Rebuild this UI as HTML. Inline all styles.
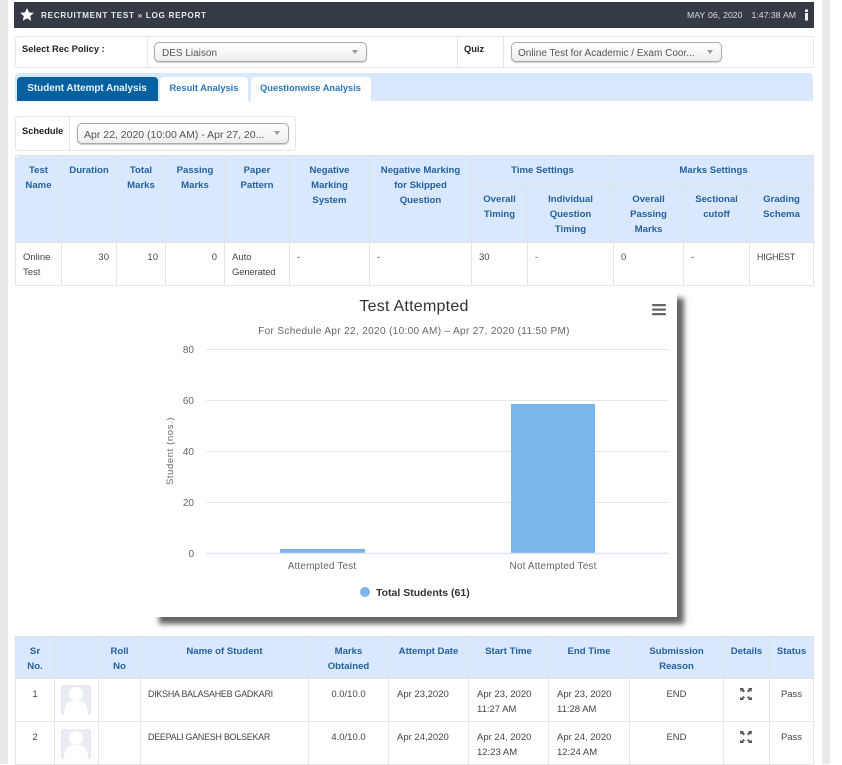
<!DOCTYPE html>
<html><head><meta charset="utf-8"><title>Log Report</title>
<style>
html,body{margin:0;padding:0;background:#fff;}
body{position:relative;width:842px;height:764px;overflow:hidden;font-family:"Liberation Sans",sans-serif;font-size:10px;color:#444;}
.a{position:absolute;white-space:nowrap;}
.box{position:absolute;box-sizing:border-box;background:#fff;border:1px solid #e6e6e6;border-radius:3px;}
.sel{position:absolute;box-sizing:border-box;border:1px solid #aaa;border-radius:5px;background:linear-gradient(#fff,#eee);box-shadow:0 1px 1px #ccc;font-size:10px;color:#555;line-height:21px;padding-left:7px;white-space:nowrap;}
.sel i{position:absolute;right:8px;top:7px;width:0;height:0;border:3.5px solid transparent;border-top:4px solid #999;border-bottom:0;}
.lab{position:absolute;font-weight:bold;font-size:9.3px;color:#222;white-space:nowrap;}
table{position:absolute;border-collapse:collapse;table-layout:fixed;font-size:9.5px;line-height:15px;}
th{background:#d9e8fd;color:#24619f;font-weight:bold;border:1px solid #e2e2e2;vertical-align:top;padding:7px 2px 0;text-align:center;font-size:9.6px;box-sizing:border-box;}
td{border:1px solid #e6e6e6;vertical-align:top;padding:7px 7px 0;background:#fff;color:#444;box-sizing:border-box;}
.t2 td{padding-top:8px}
.t2 th{padding-top:7px}
.t2 td.p8{padding-left:8px}
.n{font-size:8.9px;letter-spacing:-.22px}
.r{text-align:right}.c{text-align:center}
.tab{position:absolute;top:77px;height:24px;line-height:23px;text-align:center;font-weight:bold;font-size:9.3px;color:#2a78bd;background:#fff;border-radius:4px 4px 0 0;white-space:nowrap;}
.av{position:absolute;left:61px;width:30px;height:30px;}
</style></head><body>
<div class="a" style="left:0;top:0;width:8px;height:764px;background:#e9e9e9"></div>
<div class="a" style="left:822px;top:0;width:8px;height:764px;background:#e9e9e9"></div>

<div class="a" style="left:14px;top:2px;width:800px;height:26px;background:#343a46"></div>
<svg class="a" style="left:20px;top:8px" width="14" height="13" viewBox="0 0 14 13"><path d="M7 0l2 4.4 4.8.5-3.6 3.2 1 4.7L7 10.4 2.800 12.800l1-4.700L.2 4.900 5 4.400z" fill="#fff"/></svg>
<div class="a" style="left:41px;top:11px;font-size:8.2px;line-height:10px;font-weight:bold;color:#e8e8e8;letter-spacing:.68px">RECRUITMENT TEST » LOG REPORT</div>
<div class="a" style="left:687px;top:10px;font-size:8.7px;line-height:10px;color:#ddd;word-spacing:.6px">MAY 06, 2020&nbsp;&nbsp;&nbsp;1:47:38 AM</div>
<svg class="a" style="left:804px;top:9px" width="5" height="12" viewBox="0 0 5 12"><rect x="1" y="0.500" width="3" height="2.500" fill="#eee"/><rect x="1" y="4" width="3" height="7.500" fill="#eee"/></svg>

<div class="box" style="left:15px;top:36px;width:799px;height:32px"></div>
<div class="a" style="left:147px;top:36px;width:1px;height:32px;background:#e6e6e6"></div>
<div class="a" style="left:457px;top:36px;width:1px;height:32px;background:#e6e6e6"></div>
<div class="a" style="left:503px;top:36px;width:1px;height:32px;background:#e6e6e6"></div>
<div class="lab" style="left:22px;top:44px">Select Rec Policy :</div>
<div class="sel" style="left:154px;top:42px;width:213px;height:20px">DES Liaison<i></i></div>
<div class="lab" style="left:464px;top:44px">Quiz</div>
<div class="sel" style="left:511px;top:42px;width:211px;height:20px;padding-left:6px">Online Test for Academic / Exam Coor...<i></i></div>

<div class="a" style="left:15px;top:73px;width:798px;height:28px;background:#d9e8fd;border-radius:4px 4px 0 0"></div>
<div class="tab" style="left:17px;width:141px;background:#04609f;color:#eaf3fb;font-size:9.9px;padding-right:0;text-indent:-1px">Student Attempt Analysis</div>
<div class="tab" style="left:160px;width:88px">Result Analysis</div>
<div class="tab" style="left:251px;width:120px;font-size:9.3px;text-indent:-1px">Questionwise Analysis</div>

<div class="box" style="left:15px;top:116px;width:281px;height:35px"></div>
<div class="a" style="left:69px;top:116px;width:1px;height:35px;background:#e6e6e6"></div>
<div class="lab" style="left:22px;top:126px">Schedule</div>
<div class="sel" style="left:77px;top:123px;width:212px;height:21px;line-height:22px;font-size:10.5px;padding-left:6px">Apr 22, 2020 (10:00 AM) - Apr 27, 20...<i></i></div>

<table style="left:15px;top:155px;width:798px">
<colgroup><col style="width:46px"><col style="width:55px"><col style="width:49px"><col style="width:59px"><col style="width:65px"><col style="width:80px"><col style="width:102px"><col style="width:56px"><col style="width:86px"><col style="width:70px"><col style="width:66px"><col style="width:64px"></colgroup>
<tr style="height:29px">
<th rowspan="2" style="border-radius:4px 0 0 0">Test<br>Name</th><th rowspan="2">Duration</th><th rowspan="2">Total<br>Marks</th><th rowspan="2">Passing<br>Marks</th><th rowspan="2">Paper<br>Pattern</th><th rowspan="2">Negative<br>Marking<br>System</th><th rowspan="2">Negative Marking<br>for Skipped<br>Question</th><th colspan="2">Time Settings</th><th colspan="3">Marks Settings</th></tr>
<tr style="height:58px"><th>Overall<br>Timing</th><th>Individual<br>Question<br>Timing</th><th>Overall<br>Passing<br>Marks</th><th>Sectional<br>cutoff</th><th>Grading<br>Schema</th></tr>
<tr style="height:43px"><td>Online<br>Test</td><td class="r">30</td><td class="r">10</td><td class="r">0</td><td>Auto<br><span style="letter-spacing:-.15px">Generated</span></td><td>-</td><td>-</td><td>30</td><td>-</td><td>0</td><td>-</td><td class="n">HIGHEST</td></tr>
</table>

<div class="a" style="left:152px;top:291px;width:525px;height:326px;background:#fff;box-shadow:7px 7px 5px #666"></div>
<svg class="a" style="left:152px;top:291px" width="525" height="326" viewBox="152 291 525 326" font-family="'Liberation Sans',sans-serif">
<text x="414" y="311" text-anchor="middle" font-size="16" letter-spacing=".25" fill="#333">Test Attempted</text>
<text x="414" y="334" text-anchor="middle" font-size="10" letter-spacing=".35" fill="#666">For Schedule Apr 22, 2020 (10:00 AM) – Apr 27, 2020 (11:50 PM)</text>
<g fill="#666"><rect x="652" y="304" width="14" height="2.200" rx="1"/><rect x="652" y="308.500" width="14" height="2.200" rx="1"/><rect x="652" y="313" width="14" height="2.200" rx="1"/></g>
<g stroke="#e6e6e6" stroke-width="1"><path d="M206 349.500H668M206 400.500H668M206 451.500H668M206 502.500H668"/></g>
<rect x="280" y="549" width="85" height="4" fill="#7cb5ec"/>
<rect x="511" y="404" width="84" height="149" fill="#7cb5ec"/>
<path d="M206 553.500H668" stroke="#dfe5f2" stroke-width="1.500"/>
<g font-size="10" fill="#666" text-anchor="end"><text x="194" y="353">80</text><text x="194" y="404">60</text><text x="194" y="455">40</text><text x="194" y="506">20</text><text x="194" y="557">0</text></g>
<text transform="translate(173,451) rotate(-90)" text-anchor="middle" font-size="9.500" letter-spacing=".6" fill="#666">Student (nos.)</text>
<g font-size="10" letter-spacing=".15" fill="#666" text-anchor="middle"><text x="322" y="569">Attempted Test</text><text x="553" y="569">Not Attempted Test</text></g>
<circle cx="365" cy="592" r="5" fill="#7cb5ec"/>
<text x="376" y="596" font-size="10.500" font-weight="bold" fill="#333">Total Students (61)</text>
</svg>

<table class="t2" style="left:15px;top:636px;width:798px">
<colgroup><col style="width:39px"><col style="width:44px"><col style="width:42px"><col style="width:168px"><col style="width:80px"><col style="width:80px"><col style="width:80px"><col style="width:81px"><col style="width:94px"><col style="width:46px"><col style="width:44px"></colgroup>
<tr style="height:42px"><th>Sr<br>No.</th><th></th><th>Roll<br>No</th><th>Name of Student</th><th>Marks<br>Obtained</th><th>Attempt Date</th><th>Start Time</th><th>End Time</th><th>Submission<br>Reason</th><th>Details</th><th>Status</th></tr>
<tr style="height:43px"><td class="c">1</td><td></td><td></td><td class="n">DIKSHA BALASAHEB GADKARI</td><td class="c">0.0/10.0</td><td class="p8">Apr 23,2020</td><td class="p8">Apr 23, 2020<br>11:27 AM</td><td class="p8">Apr 23, 2020<br>11:28 AM</td><td class="c">END</td><td></td><td class="c">Pass</td></tr>
<tr style="height:43px"><td class="c">2</td><td></td><td></td><td class="n">DEEPALI GANESH BOLSEKAR</td><td class="c">4.0/10.0</td><td class="p8">Apr 24,2020</td><td class="p8">Apr 24, 2020<br>12:23 AM</td><td class="p8">Apr 24, 2020<br>12:24 AM</td><td class="c">END</td><td></td><td class="c">Pass</td></tr>
</table>

<svg class="av" style="top:685px" viewBox="0 0 30 30"><rect width="30" height="30" fill="#e9edf3"/><circle cx="15" cy="9" r="7" fill="#fff"/><path d="M3 30c0-9 3-13 8-14h8c5 1 8 5 8 14z" fill="#fff"/></svg>
<svg class="av" style="top:729px" viewBox="0 0 30 30"><rect width="30" height="30" fill="#e9edf3"/><circle cx="15" cy="9" r="7" fill="#fff"/><path d="M3 30c0-9 3-13 8-14h8c5 1 8 5 8 14z" fill="#fff"/></svg>

<svg class="a" style="left:740px;top:688px" width="12" height="12" viewBox="0 0 12 12" fill="#555"><path d="M0 0h4L3 1l2 2-1.500 1.500-2-2L.5 4zM12 0H8l1 1-2 2 1.500 1.500 2-2 1 1.500zM0 12h4l-1-1 2-1.500L3.500 8l-2 2-1.500-1zM12 12H8l1-1-2-1.500L8.500 8l2 2 1.500-1z"/></svg>
<svg class="a" style="left:740px;top:731px" width="12" height="12" viewBox="0 0 12 12" fill="#555"><path d="M0 0h4L3 1l2 2-1.500 1.500-2-2L.5 4zM12 0H8l1 1-2 2 1.500 1.500 2-2 1 1.500zM0 12h4l-1-1 2-1.500L3.500 8l-2 2-1.500-1zM12 12H8l1-1-2-1.500L8.500 8l2 2 1.500-1z"/></svg>
</body></html>
